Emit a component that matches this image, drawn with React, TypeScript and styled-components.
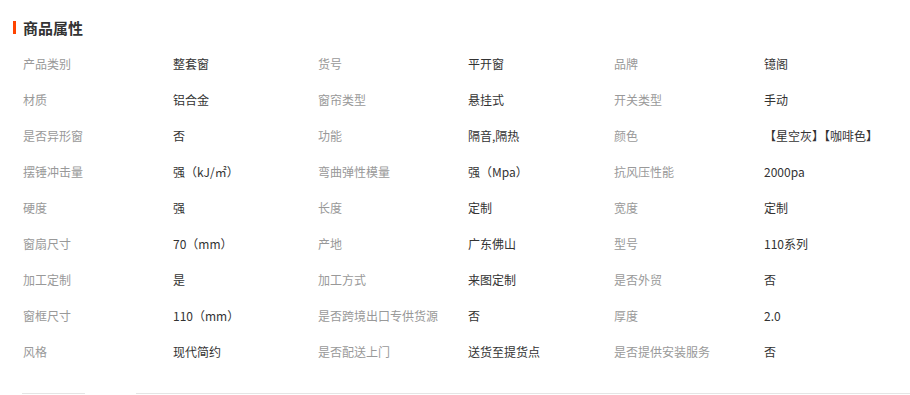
import styled, { createGlobalStyle } from 'styled-components';

const GlobalStyle = createGlobalStyle`
  body {
    margin: 0;
    background: #fff;
    font-family: "Noto Sans CJK SC", "Liberation Sans", sans-serif;
  }
`;

const attrs: [string, string][] = [
  ['产品类别', '整套窗'],
  ['货号', '平开窗'],
  ['品牌', '镱阁'],
  ['材质', '铝合金'],
  ['窗帘类型', '悬挂式'],
  ['开关类型', '手动'],
  ['是否异形窗', '否'],
  ['功能', '隔音,隔热'],
  ['颜色', '【星空灰】【咖啡色】'],
  ['摆锤冲击量', '强（kJ/㎡）'],
  ['弯曲弹性模量', '强（Mpa）'],
  ['抗风压性能', '2000pa'],
  ['硬度', '强'],
  ['长度', '定制'],
  ['宽度', '定制'],
  ['窗扇尺寸', '70（mm）'],
  ['产地', '广东佛山'],
  ['型号', '110系列'],
  ['加工定制', '是'],
  ['加工方式', '来图定制'],
  ['是否外贸', '否'],
  ['窗框尺寸', '110（mm）'],
  ['是否跨境出口专供货源', '否'],
  ['厚度', '2.0'],
  ['风格', '现代简约'],
  ['是否配送上门', '送货至提货点'],
  ['是否提供安装服务', '否'],
];

const App = () => {
  return (
    <Page>
      <GlobalStyle />
      <Title>商品属性</Title>
      <AttrGrid>
        {attrs.map(([label, value]) => (
          <Pair key={label}>
            <Label>{label}</Label>
            <Value>{value}</Value>
          </Pair>
        ))}
      </AttrGrid>
      <Tabs>
        <TabLine $width={63} />
        <TabLine $grow />
      </Tabs>
    </Page>
  );
};

export default App;

const Page = styled.div`
  width: 910px;
  height: 395px;
  overflow: hidden;
  padding-top: 19px;
  box-sizing: border-box;
`;

const Title = styled.h2`
  position: relative;
  margin: 0 0 8px 23px;
  font-size: 15px;
  line-height: 18px;
  font-weight: bold;
  color: #333;

  &::before {
    content: '';
    position: absolute;
    left: -10px;
    top: 2px;
    width: 3px;
    height: 13px;
    background: #ff4400;
  }
`;

const AttrGrid = styled.div`
  display: grid;
  grid-template-columns: 295px 296px 1fr;
  padding-left: 23px;
`;

const Pair = styled.div`
  display: grid;
  grid-template-columns: 150px 1fr;
  height: 36px;
  align-items: center;
  font-size: 12px;
`;

const Label = styled.span`
  color: #999;
  white-space: nowrap;
`;

const Value = styled.span`
  color: #333;
  white-space: nowrap;
`;

const Tabs = styled.div`
  display: flex;
  gap: 51px;
  margin-top: 24px;
  padding-left: 22px;
`;

const TabLine = styled.div<{ $width?: number; $grow?: boolean }>`
  height: 1px;
  background: #e5e5e5;
  width: ${({ $width }) => ($width ? `${$width}px` : 'auto')};
  flex: ${({ $grow }) => ($grow ? 1 : 'none')};
`;
